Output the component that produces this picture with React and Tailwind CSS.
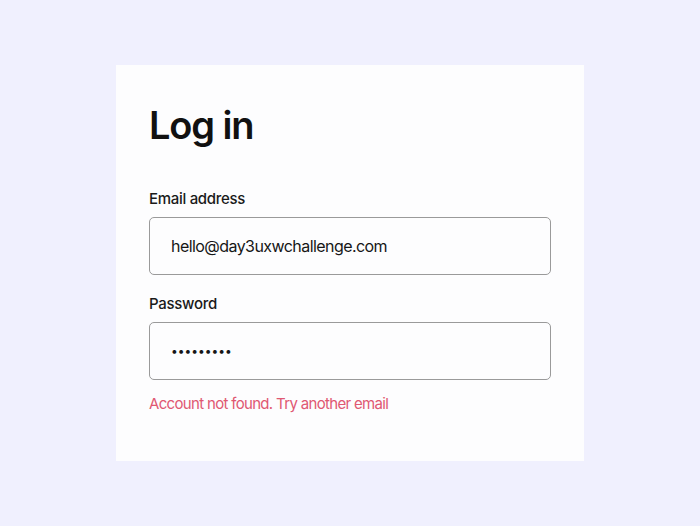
import React from "react";

export default function App() {
  return (
    <div
      className="w-[700px] h-[526px] bg-[#f0f0fe] flex items-center justify-center"
      style={{ fontFamily: "Inter, 'Liberation Sans', sans-serif" }}
    >
      <div className="w-[468px] h-[396px] bg-[#fdfdfe] px-[33px] pt-[36px] flex flex-col">
        <h1 className="text-[38px] leading-[48px] font-semibold text-[#111111] tracking-[-0.03em]">Log in</h1>
        <label className="mt-[40px] text-[15px] leading-[20px] font-medium text-[#1a1a1a] tracking-[-0.02em]">Email address</label>
        <div className="mt-[8px] h-[58px] border border-[#9a9a9a] rounded-[5px] flex items-center px-[21px] text-[16px] text-[#161616] tracking-[-0.035em]">
          hello@day3uxwchallenge.com
        </div>
        <label className="mt-[19px] text-[15px] leading-[20px] font-medium text-[#1a1a1a] tracking-[-0.02em]">Password</label>
        <div className="mt-[8px] h-[58px] border border-[#9a9a9a] rounded-[5px] flex items-center px-[21px] text-[12px] text-[#161616] tracking-[0px]">
          •••••••••
        </div>
        <p className="mt-[14px] text-[15px] leading-[20px] text-[#e05872] tracking-[-0.045em]">Account not found. Try another email</p>
      </div>
    </div>
  );
}
